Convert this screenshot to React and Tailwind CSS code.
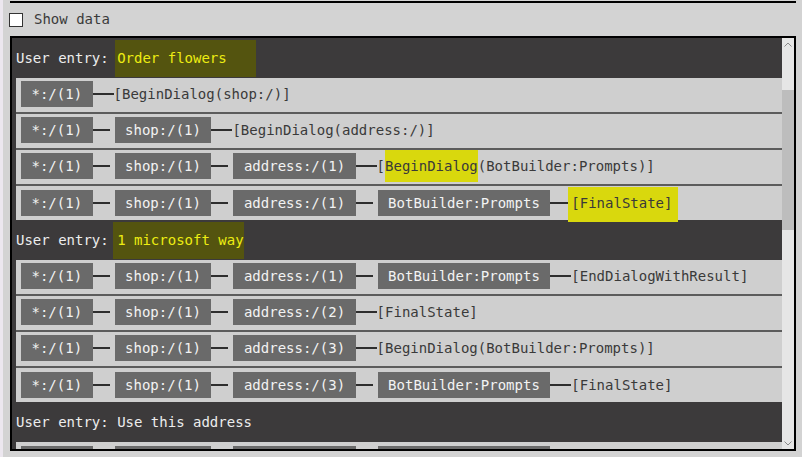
import React from "react"

const groups = [
  {
    entry: "Order flowers",
    entryHl: "pl-[2px] -ml-[2px] pr-[29px]",
    rows: [
      { boxes: ["*:/(1)"], tail: [["[BeginDialog(shop:/)]"]] },
      { boxes: ["*:/(1)", "shop:/(1)"], tail: [["[BeginDialog(address:/)]"]] },
      {
        boxes: ["*:/(1)", "shop:/(1)", "address:/(1)"],
        tail: [["["], ["BeginDialog", "hl"], ["(BotBuilder:Prompts)]"]],
      },
      {
        boxes: ["*:/(1)", "shop:/(1)", "address:/(1)", "BotBuilder:Prompts"],
        tail: [["[FinalState]", "hlwide"]],
      },
    ],
  },
  {
    entry: "1 microsoft way",
    entryHl: "pl-[4px] -ml-[4px]",
    rows: [
      {
        boxes: ["*:/(1)", "shop:/(1)", "address:/(1)", "BotBuilder:Prompts"],
        tail: [["[EndDialogWithResult]"]],
      },
      { boxes: ["*:/(1)", "shop:/(1)", "address:/(2)"], tail: [["[FinalState]"]] },
      {
        boxes: ["*:/(1)", "shop:/(1)", "address:/(3)"],
        tail: [["[BeginDialog(BotBuilder:Prompts)]"]],
      },
      {
        boxes: ["*:/(1)", "shop:/(1)", "address:/(3)", "BotBuilder:Prompts"],
        tail: [["[FinalState]"]],
      },
    ],
  },
  {
    entry: "Use this address",
    plain: true,
    rows: [
      {
        boxes: ["*:/(1)", "shop:/(1)", "address:/(3)", "BotBuilder:Prompts"],
        tail: [["[FinalState]"]],
      },
    ],
  },
]

const Line = ({ w }) => <div className={`${w} h-[1.5px] bg-[#2e2e2e] shrink-0`} />

const Row = ({ row, last }) => (
  <div
    className={`ml-[4px] h-[34px] bg-[#cfcfcf] flex items-center pl-[5px] shrink-0 ${
      last ? "" : "border-b-2 border-[#5c5c5c] h-[36px] pb-[2px] box-border"
    }`}
  >
    {row.boxes.map((b, i) => (
      <React.Fragment key={i}>
        {i > 0 && (
          <>
            <Line w="w-[17px]" />
            <div className="w-[5px] shrink-0" />
          </>
        )}
        <div className="h-[26px] px-[10.5px] bg-[#6a6a6a] text-[#f3f3f3] flex items-center whitespace-pre shrink-0">
          {b}
        </div>
      </React.Fragment>
    ))}
    <Line w="w-[21px]" />
    <div className="whitespace-pre text-[#3a3a3a]">
      {row.tail.map(([t, k], i) =>
        k === "hl" ? (
          <span key={i} className="bg-[#d9d80d] py-[8px]">
            {t}
          </span>
        ) : k === "hlwide" ? (
          <span key={i} className="bg-[#d9d80d] pt-[8px] pb-[11px] pl-[3px] -ml-[3px] pr-[6px]">
            {t}
          </span>
        ) : (
          <span key={i}>{t}</span>
        )
      )}
    </div>
  </div>
)

export default function App() {
  return (
    <div
      className="h-[457px] w-[802px] bg-[#d3d3d3] flex overflow-hidden text-[14px]"
      style={{ fontFamily: '"DejaVu Sans Mono", "Liberation Mono", monospace' }}
    >
      <div className="w-[3px] bg-[#ece7ef] shrink-0" />
      <div className="flex-1 flex flex-col pl-[7px] pr-[6px]">
        <div className="h-[3px] border-b-2 border-black shrink-0" />
        <div className="h-[33px] flex items-center shrink-0 -ml-[1px] text-[#3a3a3a]">
          <div className="w-[14px] h-[14px] bg-white border border-[#333] shrink-0" />
          <span className="ml-[11px]">Show data</span>
        </div>
        <div className="h-[415px] border-2 border-black flex shrink-0 overflow-hidden">
          <div className="flex-1 bg-[#3c3a3b] flex flex-col overflow-hidden">
            {groups.map((g, gi) => (
              <React.Fragment key={gi}>
                <div className="h-[40px] flex items-center pl-[4px] text-[#ededed] whitespace-pre shrink-0">
                  <span>User entry: </span>
                  {g.plain ? (
                    <span>{g.entry}</span>
                  ) : (
                    <span className={`bg-[#54540f] text-[#eded12] py-[8px] ${g.entryHl}`}>
                      {g.entry}
                    </span>
                  )}
                </div>
                {g.rows.map((r, ri) => (
                  <Row key={ri} row={r} last={ri === g.rows.length - 1} />
                ))}
              </React.Fragment>
            ))}
          </div>
          <div className="w-[12px] bg-[#e6e6e6] flex flex-col shrink-0">
            <div className="h-[12px] flex items-center justify-center">
              <svg width="8" height="5" viewBox="0 0 8 5">
                <path d="M0.5 4.5 L4 1 L7.5 4.5" fill="none" stroke="#8a8a8a" strokeWidth="1" />
              </svg>
            </div>
            <div className="h-[40px]" />
            <div className="h-[140px] bg-[#bdbdbd]" />
            <div className="flex-1" />
            <div className="h-[12px] flex items-center justify-center">
              <svg width="8" height="5" viewBox="0 0 8 5">
                <path d="M0.5 0.5 L4 4 L7.5 0.5" fill="none" stroke="#8a8a8a" strokeWidth="1" />
              </svg>
            </div>
          </div>
        </div>
      </div>
    </div>
  )
}
